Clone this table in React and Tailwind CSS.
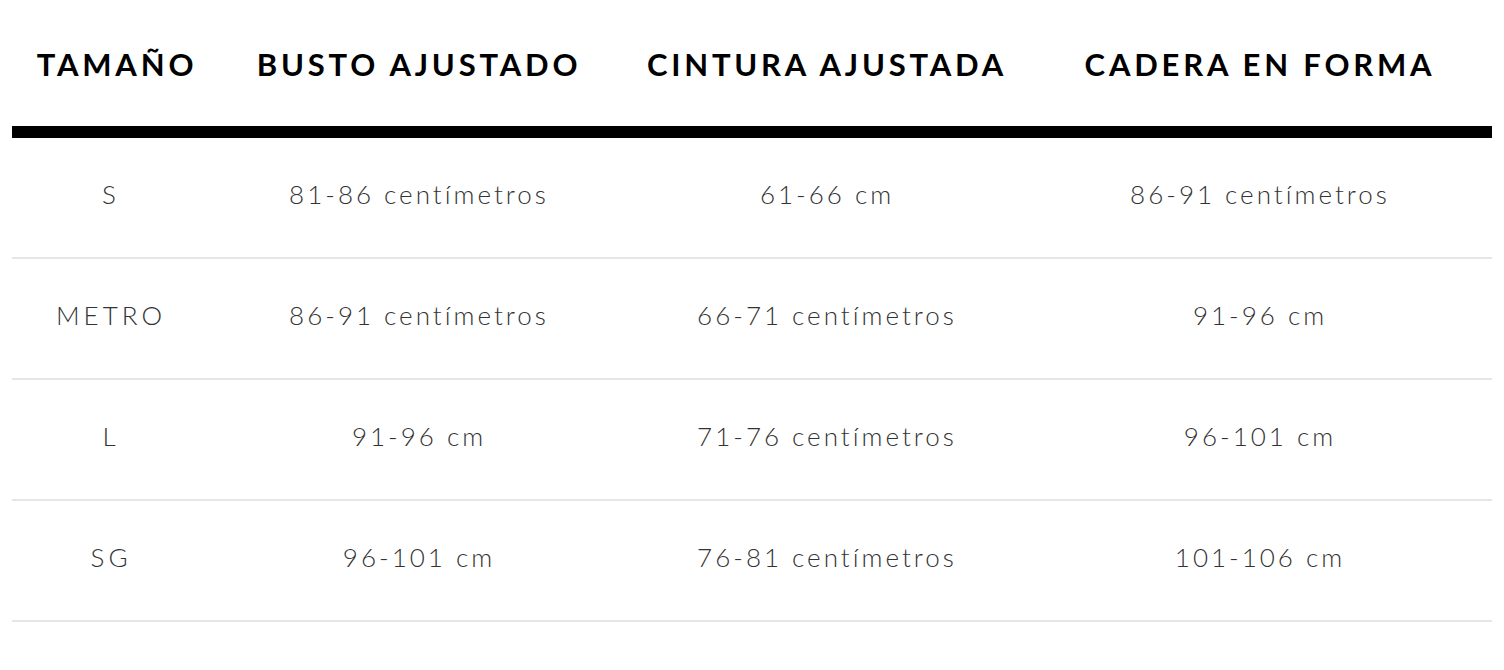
import React from 'react';

const headers = ['TAMAÑO', 'BUSTO AJUSTADO', 'CINTURA AJUSTADA', 'CADERA EN FORMA'];

const rows = [
  ['S', '81-86 centímetros', '61-66 cm', '86-91 centímetros'],
  ['METRO', '86-91 centímetros', '66-71 centímetros', '91-96 cm'],
  ['L', '91-96 cm', '71-76 centímetros', '96-101 cm'],
  ['SG', '96-101 cm', '76-81 centímetros', '101-106 cm'],
];

const cols = 'grid grid-cols-[210px_394px_422px_444px_10px]';

const App = () => {
  return (
    <div className="w-[1504px] h-[670px] bg-white px-[12px] font-['Lato','Liberation_Sans',sans-serif] overflow-hidden">
      {/* Cabecera */}
      <div className={`${cols} h-[126px] items-center border-b-[12px] border-black box-content`}>
        {headers.map(h => (
          <div key={h} className="text-center text-[31px] font-bold tracking-[3.8px] text-black pt-[2px]">
            {h}
          </div>
        ))}
        <div />
      </div>

      {/* Filas */}
      {rows.map(row => (
        <div key={row[0]} className={`${cols} h-[119px] items-center border-b-2 border-[#e6e6e6] box-content`}>
          {row.map((cell, i) => (
            <div
              key={i}
              className={`text-center text-[26px] font-light text-[#333333] pb-[6px] ${i === 0 ? 'pr-[12px] tracking-[4px]' : 'tracking-[3px]'}`}
            >
              {cell}
            </div>
          ))}
          <div />
        </div>
      ))}
    </div>
  );
};

export default App;
